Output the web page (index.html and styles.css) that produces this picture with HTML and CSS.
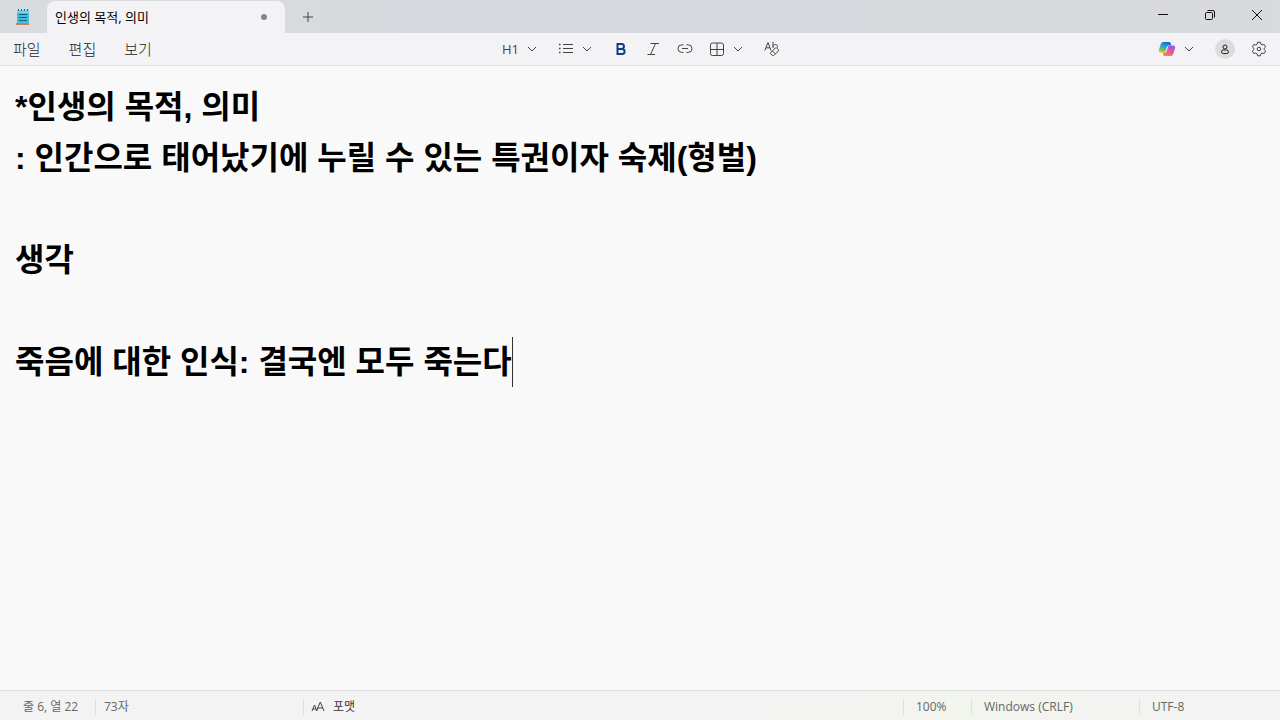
FILE: index.html
```html
<!DOCTYPE html>
<html lang="ko">

<head>
    <meta charset="UTF-8">
    <meta name="viewport" content="width=device-width, initial-scale=1.0">
    <title>인생의 목적, 의미</title>
    <link rel="stylesheet" href="styles.css">
</head>

<body>
    <header class="titlebar">
        <svg class="app-icon" width="16" height="18" viewBox="0 0 16 18">
            <path d="M1 15h13v2H1z" fill="#b98563" />
            <rect x="2" y="2" width="12" height="13" rx="1" fill="#42bddd" />
            <path d="M2 2h12v3H2z" fill="#74d4ea" />
            <path d="M3.5 1v2M6.5 1v2M9.5 1v2M12.5 1v2" stroke="#236b85" />
            <path d="M4 6.5h8M4 9.5h8M4 12.5h8" stroke="#14607f" stroke-width="1.2" />
        </svg>
        <div class="tab">
            <span class="tab-title">인생의 목적, 의미</span>
            <span class="unsaved"></span>
        </div>
        <button class="new-tab" aria-label="새 탭">
            <svg width="12" height="12" viewBox="0 0 12 12"><path d="M6 1v10M1 6h10" /></svg>
        </button>
        <div class="window-buttons">
            <button aria-label="최소화">
                <svg width="12" height="12" viewBox="0 0 12 12"><path d="M1 5.5h10" /></svg>
            </button>
            <button aria-label="이전 크기로 복원">
                <svg width="12" height="12" viewBox="0 0 12 12"><rect x="1.5" y="3.5" width="7" height="7" rx="1" /><path d="M3.5 1.5H9A1.5 1.5 0 0 1 10.5 3v5.5" /></svg>
            </button>
            <button aria-label="닫기">
                <svg width="12" height="12" viewBox="0 0 12 12"><path d="M1 1l10 10M11 1L1 11" /></svg>
            </button>
        </div>
    </header>

    <nav class="toolbar">
        <div class="menus">
            <button>파일</button>
            <button>편집</button>
            <button>보기</button>
        </div>

        <div class="format">
            <button class="drop" aria-label="제목">
                <span>H1</span>
                <svg width="10" height="10" viewBox="0 0 10 10"><path d="M1 3l4 4 4-4" /></svg>
            </button>
            <button class="drop" aria-label="목록">
                <svg width="16" height="16" viewBox="0 0 16 16"><path d="M5 3.5h10M5 7.5h10M5 11.5h10" /><path d="M1 3.5h1.5M1 7.5h1.5M1 11.5h1.5" stroke-width="1.6" /></svg>
                <svg width="10" height="10" viewBox="0 0 10 10"><path d="M1 3l4 4 4-4" /></svg>
            </button>
            <button class="bold" aria-label="굵게">
                <svg width="16" height="16" viewBox="0 0 16 16"><path d="M4.5 3h4a2.4 2.4 0 0 1 0 4.9h-4zM4.5 7.9H9a2.6 2.6 0 0 1 0 5.2H4.5z" /></svg>
            </button>
            <button aria-label="기울임꼴">
                <svg width="16" height="16" viewBox="0 0 16 16"><path d="M5.5 2.5H14M2.5 13.5H10M10.5 2.5l-5 11" /></svg>
            </button>
            <button aria-label="링크">
                <svg width="16" height="16" viewBox="0 0 16 16"><path d="M6.5 3.8H4.8a3.8 3.8 0 0 0 0 7.6h1.7M9.5 3.8h1.7a3.8 3.8 0 0 1 0 7.6H9.5M5 7.5h6" /></svg>
            </button>
            <button class="drop" aria-label="표">
                <svg width="16" height="16" viewBox="0 0 16 16"><rect x="1.5" y="2" width="13" height="12.5" rx="2" /><path d="M8 2v12.5M1.5 8.5h13" /></svg>
                <svg width="10" height="10" viewBox="0 0 10 10"><path d="M1 3l4 4 4-4" /></svg>
            </button>
            <button aria-label="서식 지우기">
                <svg width="16" height="16" viewBox="0 0 16 16"><path d="M.8 9.5L4 1.5l3 8M2 6.8h4M9 1v6M9 5.5c0-2.6 4.5-2.6 4.5 0v1" /><path d="M6.800 11.500L11.300 7q.7-.7 1.400 0l1.600 1.600q.7.7 0 1.400l-4.500 4.500q-.7.700-1.400 0l-1.600-1.600q-.7-.7 0-1.400zM8.400 9.900l3 3" /></svg>
            </button>
        </div>

        <div class="account">
            <button class="drop copilot" aria-label="Copilot">
                <svg width="18" height="16" viewBox="0 0 18 16">
                    <defs>
                        <linearGradient id="cool" x1="0.6" y1="0" x2="0.2" y2="1">
                            <stop offset="0" stop-color="#1b63d8" />
                            <stop offset="0.4" stop-color="#20a5d5" />
                            <stop offset="0.7" stop-color="#6cc05c" />
                            <stop offset="1" stop-color="#f3c531" />
                        </linearGradient>
                        <linearGradient id="warm" x1="0.7" y1="0" x2="0.3" y2="1">
                            <stop offset="0" stop-color="#8d5be8" />
                            <stop offset="0.5" stop-color="#e8549a" />
                            <stop offset="1" stop-color="#f98643" />
                        </linearGradient>
                    </defs>
                    <path class="fill" fill="url(#cool)" d="M5.5 1h5.5c1 0 1.5.6 1.800 1.500l.6 2H11c-1.200 0-1.800.6-2.100 1.600l-1.300 4c-.3 1-.9 1.700-2 1.700H3C1 11.800.4 10.400 1 8.500l1.800-5.400C3.300 1.700 4.100 1 5.500 1z" />
                    <path class="fill" fill="url(#warm)" d="M12.5 15H7c-1 0-1.500-.6-1.800-1.500l-.5-1.700H6c1.500 0 2.300-.7 2.700-1.900l1.300-4c.3-.9.9-1.400 2-1.400h3c2 0 2.600 1.400 2 3.300l-1.800 5.100c-.5 1.400-1.300 2.100-2.700 2.100z" />
                </svg>
                <svg width="10" height="10" viewBox="0 0 10 10"><path d="M1 3l4 4 4-4" /></svg>
            </button>
            <button class="avatar" aria-label="계정">
                <svg width="10" height="10" viewBox="0 0 10 10"><circle cx="5" cy="3" r="2" /><rect x="1.5" y="6" width="7" height="3.5" rx="1.7" /></svg>
            </button>
            <button aria-label="설정">
                <svg width="16" height="16" viewBox="0 0 16 16"><path d="M6.6 1.2h2.8l.5 2 1.3.8 2-.6 1.4 2.5-1.5 1.4v1.4l1.5 1.4-1.4 2.5-2-.6-1.3.8-.5 2H6.6l-.5-2-1.3-.8-2 .6-1.4-2.5 1.5-1.4V7.3L1.4 5.9l1.4-2.5 2 .6 1.3-.8z" /><circle cx="8" cy="8" r="1.8" /></svg>
            </button>
        </div>
    </nav>

    <main class="editor" contenteditable="true" role="textbox" aria-multiline="true" aria-label="텍스트 편집기" spellcheck="false">
        <h1>*인생의 목적, 의미</h1>
        <h1>: 인간으로 태어났기에 누릴 수 있는 특권이자 숙제(형벌)</h1>
        <h1><br></h1>
        <h1>생각</h1>
        <h1><br></h1>
        <h1 class="current">죽음에 대한 인식: 결국엔 모두 죽는다</h1>
    </main>

    <footer class="statusbar">
        <span class="position">줄 6, 열 22</span>
        <span class="count">73자</span>
        <span class="mode">
            <svg width="14" height="12" viewBox="0 0 14 12"><path d="M1 10l2.5-6L6 10M2 8h3M5.5 10L9.3 1 13 10M6.5 7h5.5" /></svg>
            포맷
        </span>
        <span class="zoom">100%</span>
        <span class="eol">Windows (CRLF)</span>
        <span class="encoding">UTF-8</span>
    </footer>
</body>

</html>
```
FILE: styles.css
```css
* {
    box-sizing: border-box;
}

body {
    margin: 0;
    min-height: 100vh;
    display: flex;
    flex-direction: column;
    font-family: "Open Sans", "Noto Sans CJK KR", sans-serif;
    font-size: 12px;
    color: #222;
    background: #f9f9f9;
}

button {
    display: flex;
    align-items: center;
    justify-content: center;
    padding: 0;
    border: 0;
    background: none;
    color: inherit;
    font: inherit;
}

svg {
    display: block;
    flex: none;
    fill: none;
    stroke: #444;
    stroke-width: 1;
}

/* title bar */
.titlebar {
    display: flex;
    align-items: center;
    height: 33px;
    background: linear-gradient(90deg, #dadbdd, #d8d9df 50%, #d9dadc);
}

.app-icon {
    margin: 0 16px 0 15px;
    stroke: none;
}

.tab {
    display: flex;
    align-items: center;
    justify-content: space-between;
    align-self: flex-end;
    width: 238px;
    height: 32px;
    padding: 0 18px 0 8px;
    border-radius: 8px 8px 0 0;
    background: #f3f3f6;
    color: #000;
    font-size: 13px;
    line-height: 16px;
}

.unsaved {
    width: 6px;
    height: 6px;
    border-radius: 50%;
    background: #858587;
}

.new-tab {
    width: 32px;
    height: 32px;
    margin-left: 7px;
}

.window-buttons {
    display: flex;
    align-self: stretch;
    margin-left: auto;
}

.window-buttons button {
    width: 47px;
    height: 30px;
}

.window-buttons svg {
    stroke: #111;
}

/* menus and formatting */
.toolbar {
    display: grid;
    grid-template-columns: 1fr auto 1fr;
    align-items: center;
    height: 33px;
    border-bottom: 1px solid #e3e3e5;
    background: #f3f3f6;
}

.menus {
    display: flex;
    gap: 28px;
    padding-left: 13px;
    font-size: 15px;
    line-height: 20px;
    font-weight: 300;
}

.format {
    display: flex;
    align-items: center;
    gap: 16px;
    padding-left: 2px;
}

.format .drop {
    gap: 8px;
    margin-right: 5px;
    font-size: 13px;
    color: #444;
}

.format .bold svg {
    stroke: #0b3f8c;
    stroke-width: 2;
}

.account {
    display: flex;
    align-items: center;
    justify-content: flex-end;
    gap: 16px;
    padding-right: 13px;
}

.copilot {
    gap: 8px;
    margin-right: 5px;
}

.copilot .fill {
    stroke: none;
}

.avatar {
    width: 20px;
    height: 20px;
    border-radius: 50%;
    background: #dcdcde;
}

.avatar svg {
    stroke: #222;
}

/* document */
.editor {
    flex: 1;
    padding: 16px 15px;
    outline: none;
    color: #000;
    font-family: "Liberation Sans", "Noto Sans CJK KR", sans-serif;
}

.editor h1 {
    margin: 0;
    font-size: 32px;
    font-weight: 700;
    line-height: 51px;
}

.current::after {
    content: "";
    display: inline-block;
    width: 1px;
    height: 50px;
    vertical-align: top;
    background: #333;
}

/* status bar */
.statusbar {
    display: flex;
    align-items: center;
    height: 30px;
    padding: 2px 0 0 23px;
    border-top: 1px solid #e0e0e0;
    background: linear-gradient(90deg, #f3f3f3 55%, #f2f4ee 75%, #f3f3f3);
    color: #666;
}

.statusbar span {
    height: 16px;
    line-height: 16px;
}

.statusbar span + span {
    border-left: 1px solid #e0e0e0;
}

.position {
    width: 72px;
}

.count {
    width: 208px;
    padding-left: 8px;
}

.mode {
    display: flex;
    align-items: center;
    gap: 8px;
    margin-right: auto;
    padding-left: 7px;
    color: #333;
}

.zoom {
    width: 68px;
    padding-left: 12px;
}

.eol {
    width: 168px;
    padding-left: 12px;
}

.encoding {
    width: 141px;
    padding-left: 12px;
}
```
